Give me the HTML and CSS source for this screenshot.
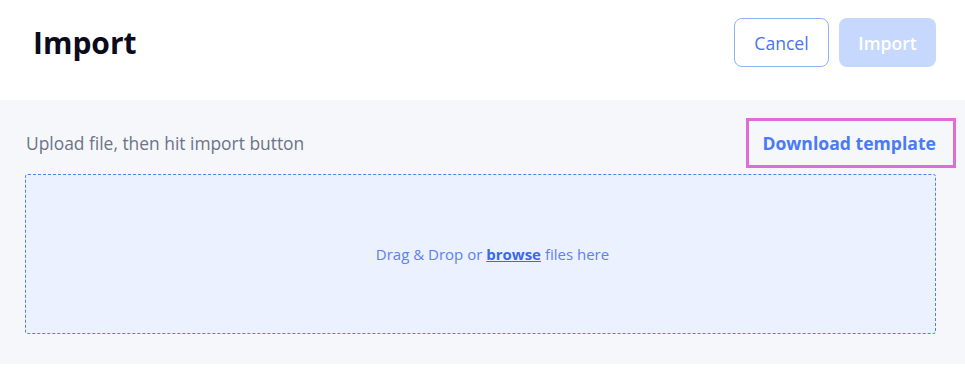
FILE: index.html
```html
<!DOCTYPE html>
<html lang="en">
<head>
  <meta charset="UTF-8">
  <meta name="viewport" content="width=device-width, initial-scale=1.0">
  <title>Import</title>
  <link rel="stylesheet" href="styles.css">
</head>
<body>
  <div class="header">
    <h1 class="title">Import</h1>
    <div class="actions">
      <button class="btn btn-cancel">Cancel</button>
      <button class="btn btn-import" disabled>Import</button>
    </div>
  </div>

  <div class="panel">
    <div class="panel-top">
      <p class="hint">Upload file, then hit import button</p>
      <a href="#" class="download-link">Download template</a>
    </div>
    <div class="dropzone">
      <p>Drag &amp; Drop or <a href="#" class="browse">browse</a> files here</p>
    </div>
  </div>
</body>
</html>
```

FILE: styles.css
```css
/* General Styles */
body {
  margin: 0;
  font-family: 'Open Sans', 'Noto Sans', sans-serif;
  background: #fff;
  color: #0b0b1c;
}

.header {
  height: 100px;
  box-sizing: border-box;
  display: flex;
  align-items: flex-start;
  justify-content: space-between;
  padding: 18px 29px 0 33px;
}

.title {
  margin: 0;
  height: 49px;
  line-height: 49px;
  font-size: 30px;
  font-weight: 700;
  color: #0b0b1c;
}

.actions {
  display: flex;
  gap: 10px;
}

.btn {
  height: 49px;
  border-radius: 8px;
  font-family: inherit;
  font-size: 17.6px;
  padding: 0;
  cursor: pointer;
}

.btn-cancel {
  width: 95px;
  background: #fff;
  border: 1px solid #8fb1f6;
  color: #4a72f2;
}

.btn-import {
  width: 97px;
  background: #c6d8fd;
  border: none;
  color: #fff;
  font-weight: 600;
}

.panel {
  background: #f6f7fb;
  padding: 19px 29px 30px 25px;
}

.panel-top {
  height: 47px;
  display: flex;
  align-items: center;
  justify-content: space-between;
  margin-bottom: 8px;
}

.hint {
  margin: 0;
  padding-left: 1px;
  font-size: 17.4px;
  color: #6b7388;
}

.download-link {
  position: relative;
  font-size: 17.6px;
  font-weight: 700;
  color: #4a7af5;
  text-decoration: none;
}

/* highlight box round the link */
.download-link::after {
  content: '';
  position: absolute;
  top: -13px;
  bottom: -13px;
  left: -16px;
  right: -20px;
  border: 3px solid #e06bd9;
}

.dropzone {
  height: 158px;
  border: 1px dashed #4a82f6;
  border-radius: 3px;
  background: #ebf1fe;
  display: flex;
  align-items: center;
  justify-content: center;
  padding-left: 24px;
}

.dropzone p {
  margin: 0;
  font-size: 15px;
  color: #5f80f0;
}

.browse {
  color: #3b6ae6;
  font-weight: 700;
}
```
